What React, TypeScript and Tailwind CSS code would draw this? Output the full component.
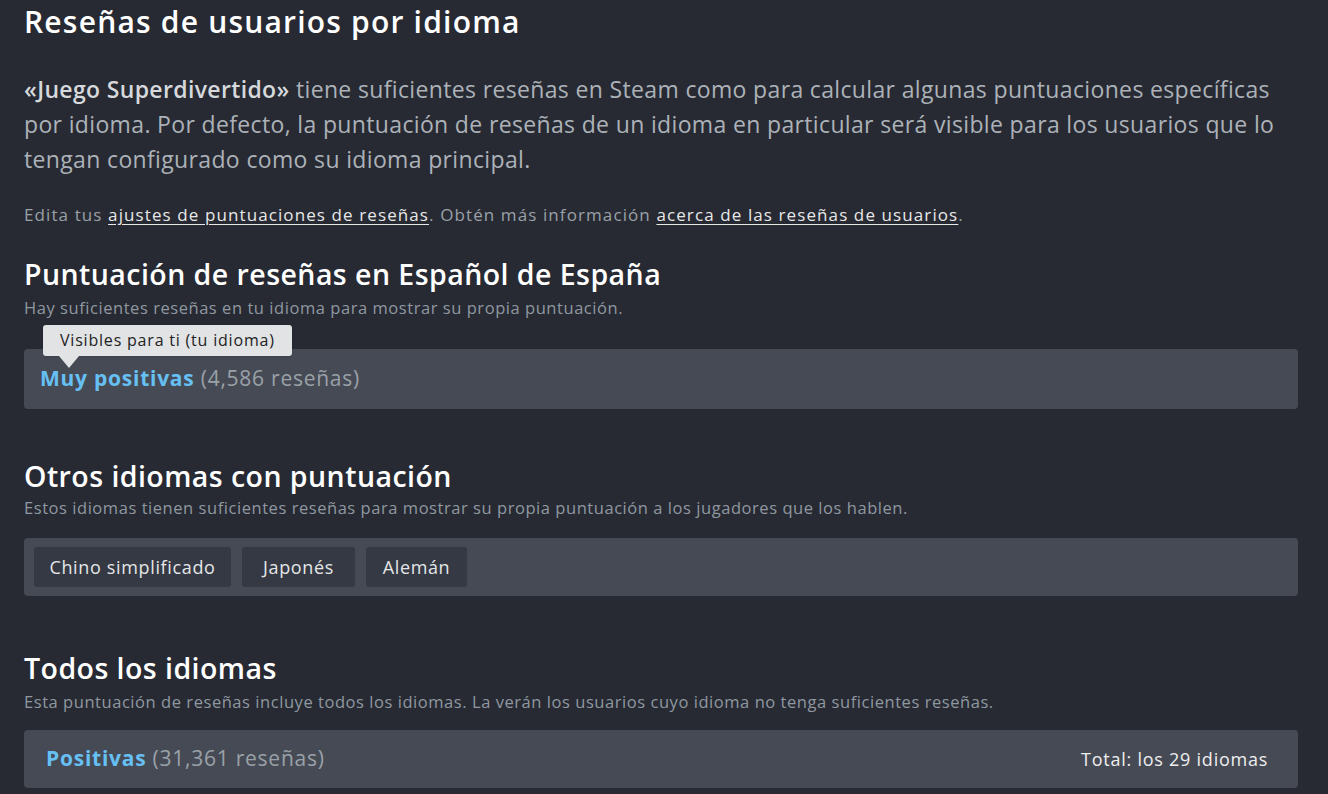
import React from "react";

const font = { fontFamily: '"Open Sans", "Noto Sans", sans-serif' };

const chips = [
  { t: "Chino simplificado", w: "w-[197px]" },
  { t: "Japonés", w: "w-[113px]" },
  { t: "Alemán", w: "w-[101px]" },
];

export default function App() {
  return (
    <div
      className="min-h-[794px] w-full bg-[#272a33] pl-6 pr-[30px] text-[#acb2b8]"
      style={font}
    >
      <h1 className="pt-[3px] text-[30px] font-semibold leading-[38px] tracking-[1.2px] text-white">
        Reseñas de usuarios por idioma
      </h1>

      <p className="mt-[31px] text-[23px] leading-[35px] tracking-[0.35px] text-[#acb2b8]">
        <span className="font-semibold text-[#d6d9dc]">«Juego Superdivertido»</span> tiene
        suficientes reseñas en Steam como para calcular algunas puntuaciones específicas por
        idioma. Por defecto, la puntuación de reseñas de un idioma en particular será visible
        para los usuarios que lo tengan configurado como su idioma principal.
      </p>

      <p className="mt-[26px] text-[17px] leading-[24px] tracking-[1.1px] text-[#9aa1a8]">
        Edita tus{" "}
        <span className="text-[#e8e8e8] underline underline-offset-[3px]">
          ajustes de puntuaciones de reseñas
        </span>
        . Obtén más información{" "}
        <span className="text-[#e8e8e8] underline underline-offset-[3px]">
          acerca de las reseñas de usuarios
        </span>
        .
      </p>

      <h2 className="mt-[29px] text-[28.5px] font-semibold leading-[36px] tracking-[0.45px] text-white">
        Puntuación de reseñas en Español de España
      </h2>
      <p className="mt-[5px] text-[16.5px] leading-[22px] tracking-[0.55px] text-[#8f98a0]">
        Hay suficientes reseñas en tu idioma para mostrar su propia puntuación.
      </p>

      <div className="relative mt-[30px] flex h-[60px] items-center rounded bg-[#464a55] px-4">
        <div className="absolute left-[19px] top-[-24px] rounded-[3px] bg-[#e2e3e5] px-[17px] py-[4px] text-[16px] leading-[23px] tracking-[0.8px] text-[#222] shadow">
          Visibles para ti (tu idioma)
          <div className="absolute left-[16px] top-full h-0 w-0 border-x-[10px] border-t-[12px] border-x-transparent border-t-[#e2e3e5]" />
        </div>
        <span className="text-[21px] tracking-[0.75px]">
          <span className="font-bold text-[#66c0f4]">Muy positivas</span>{" "}
          <span className="text-[#9aa1a8]">(4,586 reseñas)</span>
        </span>
      </div>

      <h2 className="mt-[49px] text-[28.5px] font-semibold leading-[36px] tracking-[0.45px] text-white">
        Otros idiomas con puntuación
      </h2>
      <p className="mt-[3px] text-[16.5px] leading-[22px] tracking-[0.55px] text-[#8f98a0]">
        Estos idiomas tienen suficientes reseñas para mostrar su propia puntuación a los
        jugadores que los hablen.
      </p>

      <div className="mt-[19px] flex h-[58px] items-center gap-[11px] rounded bg-[#464a55] px-[10px]">
        {chips.map((c) => (
          <div
            key={c.t}
            className={`flex h-[40px] items-center justify-center rounded-[3px] bg-[#353943] text-[18px] tracking-[0.65px] text-[#e4e6e8] ${c.w}`}
          >
            {c.t}
          </div>
        ))}
      </div>

      <h2 className="mt-[54px] text-[28.5px] font-semibold leading-[36px] tracking-[0.45px] text-white">
        Todos los idiomas
      </h2>
      <p className="mt-[5px] text-[16.5px] leading-[22px] tracking-[0.55px] text-[#8f98a0]">
        Esta puntuación de reseñas incluye todos los idiomas. La verán los usuarios cuyo idioma
        no tenga suficientes reseñas.
      </p>

      <div className="mt-[17px] flex h-[58px] items-center justify-between rounded bg-[#464a55] pl-[22px] pr-[30px]">
        <span className="text-[21px] tracking-[0.75px]">
          <span className="font-bold text-[#66c0f4]">Positivas</span>{" "}
          <span className="text-[#9aa1a8]">(31,361 reseñas)</span>
        </span>
        <span className="text-[18px] tracking-[0.75px] text-[#eeeeee]">Total: los 29 idiomas</span>
      </div>
    </div>
  );
}
